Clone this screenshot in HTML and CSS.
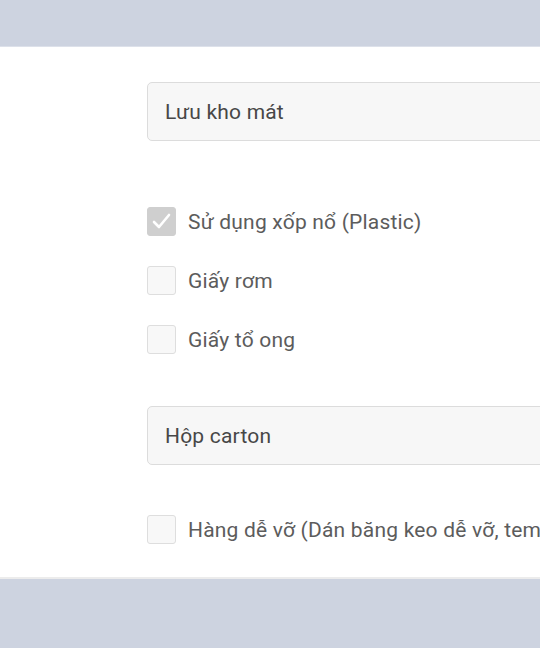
FILE: index.html
```html
<!DOCTYPE html>
<html lang="vi">
<head>
    <meta charset="UTF-8">
    <meta name="viewport" content="width=device-width, initial-scale=1.0">
    <title>Đóng gói</title>
    <link rel="stylesheet" href="styles.css">
</head>
<body>

    <!-- thanh trên -->
    <div class="top-bar"></div>

    <div class="panel">
        <div class="field">Lưu kho mát</div>

        <div class="check-list">
            <label class="check-row">
                <span class="box checked">
                    <svg viewBox="0 0 29 29" width="29" height="29">
                        <polyline points="7,15 12,20 22,8" fill="none" stroke="#fff" stroke-width="2.6" stroke-linecap="round" stroke-linejoin="round"/>
                    </svg>
                </span>
                <span class="label">Sử dụng xốp nổ (Plastic)</span>
            </label>
            <label class="check-row">
                <span class="box"></span>
                <span class="label">Giấy rơm</span>
            </label>
            <label class="check-row">
                <span class="box"></span>
                <span class="label">Giấy tổ ong</span>
            </label>
        </div>

        <div class="field field-2">Hộp carton</div>

        <label class="check-row last-row">
            <span class="box"></span>
            <span class="label">Hàng dễ vỡ (Dán băng keo dễ vỡ, tem cảnh báo)</span>
        </label>
    </div>

    <!-- thanh dưới -->
    <div class="bottom-bar"></div>

</body>
</html>
```

FILE: styles.css
```css
/* trang */
body {
    margin: 0;
    height: 648px;
    overflow: hidden;
    background: #fff;
    font-family: Roboto, "Noto Sans", Arial, sans-serif;
    display: flex;
    flex-direction: column;
}

.top-bar {
    height: 46px;
    background: #cdd3e0;
    border-bottom: 1px solid #dde1ea;
    flex: none;
}

.panel {
    flex: 1;
    padding: 35px 0 0 147px;
    display: flex;
    flex-direction: column;
    overflow: hidden;
}

/* ô nhập */
.field {
    height: 57px;
    margin-right: -20px;
    border: 1px solid #dcdcdc;
    border-radius: 5px;
    background: #f7f7f7;
    display: flex;
    align-items: center;
    padding-left: 17px;
    font-size: 21px;
    letter-spacing: 0.2px;
    color: #474747;
}

.field-2 {
    margin-top: 52px;
}

/* hộp kiểm */
.check-list {
    margin-top: 66px;
    display: flex;
    flex-direction: column;
    gap: 30px;
}

.check-row {
    display: flex;
    align-items: center;
    gap: 12px;
    white-space: nowrap;
}

.box {
    width: 27px;
    height: 27px;
    border: 1px solid #dedede;
    border-radius: 3px;
    background: #f8f8f8;
    flex: none;
    position: relative;
}

.box.checked {
    background: #cfcfcf;
    border-color: #cfcfcf;
}

.box svg {
    position: absolute;
    left: -1px;
    top: -1px;
}

.label {
    font-size: 21px;
    letter-spacing: 0.2px;
    color: #5c5c5c;
}

.last-row {
    margin-top: 50px;
}

.bottom-bar {
    height: 69px;
    background: #cdd3e0;
    border-top: 2px solid #ececec;
    flex: none;
}
```
